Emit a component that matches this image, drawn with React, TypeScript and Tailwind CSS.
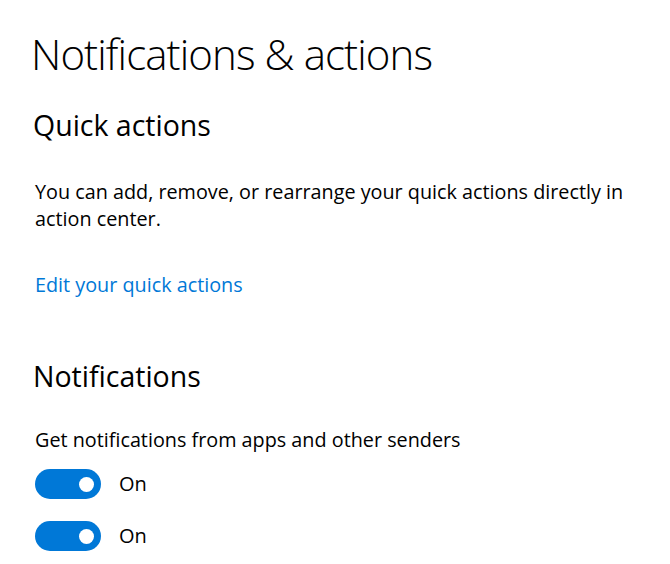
import React from "react";

function Toggle() {
  return (
    <div className="flex items-center h-[30px]">
      <div className="w-[66px] h-[30px] rounded-full bg-[#0078d7] flex items-center justify-end pr-[7px]">
        <div className="w-[15px] h-[15px] rounded-full bg-white" />
      </div>
      <span className="ml-[18px] text-[20px] text-black leading-none">On</span>
    </div>
  );
}

export default function App() {
  return (
    <div
      className="w-[670px] h-[564px] bg-white text-black pl-[33px] pt-[28px] overflow-hidden"
      style={{ fontFamily: '"Open Sans", "Noto Sans", sans-serif' }}
    >
      <h1 className="-ml-[2px] text-[42px] font-light leading-[52px] tracking-[-0.9px]">Notifications &amp; actions</h1>
      <h2 className="mt-[27px] text-[28.5px] font-normal leading-[36px]">Quick actions</h2>
      <p className="mt-[35px] text-[19.8px] leading-[27px] pl-[2px] w-[630px]">
        You can add, remove, or rearrange your quick actions directly in action center.
      </p>
      <a className="block mt-[39px] pl-[2px] text-[19.8px] leading-[27px] text-[#0078d7]">Edit your quick actions</a>
      <h2 className="mt-[60px] text-[28.5px] font-normal leading-[36px]">Notifications</h2>
      <p className="mt-[32px] pl-[2px] text-[19.8px] leading-[27px]">Get notifications from apps and other senders</p>
      <div className="mt-[16px] pl-[2px] flex flex-col gap-[22px]">
        <Toggle />
        <Toggle />
      </div>
    </div>
  );
}
